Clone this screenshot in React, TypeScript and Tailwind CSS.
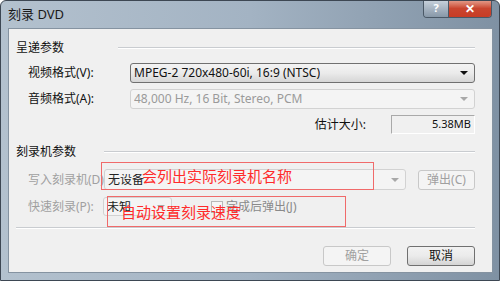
import React from 'react';

const font = { fontFamily: '"Noto Sans", "Noto Sans CJK SC", sans-serif' };

const Arrow = ({ disabled }: { disabled?: boolean }) => (
    <div
        className={`w-0 h-0 border-l-[4px] border-r-[4px] border-t-[4px] border-l-transparent border-r-transparent ${
            disabled ? 'border-t-[#a8a8a8]' : 'border-t-[#111]'
        }`}
    />
);

const Combo = ({ text, disabled, className }: { text: string; disabled?: boolean; className?: string }) => (
    <div
        className={`flex items-center justify-between rounded-[3px] border pl-[3px] pr-[6px] text-[12px] leading-none ${
            disabled
                ? 'border-[#d2d2d2] bg-[#f4f4f4] text-[#9a9a9a]'
                : 'border-[#707070] bg-gradient-to-b from-[#f3f3f3] via-[#ebebeb] to-[#d6d6d6] text-[#111]'
        } ${className ?? ''}`}
    >
        <span className="whitespace-nowrap overflow-hidden">{text}</span>
        <Arrow disabled={disabled} />
    </div>
);

const Separator = ({ className }: { className?: string }) => (
    <div className={`h-[2px] border-t border-[#c9ccd0] border-b border-b-white ${className ?? ''}`} />
);

const Button = ({ label, disabled, className }: { label: string; disabled?: boolean; className?: string }) => (
    <div
        className={`flex items-center justify-center rounded-[3px] border text-[12px] leading-none ${
            disabled
                ? 'border-[#c8c8c8] bg-[#f4f4f4] text-[#a0a0a0]'
                : 'border-[#707070] bg-gradient-to-b from-[#f2f2f2] via-[#ebebeb] to-[#d4d4d4] text-[#111]'
        } ${className ?? ''}`}
    >
        {label}
    </div>
);

export default function App() {
    return (
        <div
            className="relative w-[500px] h-[281px] overflow-hidden rounded-t-[6px] border border-[#3d4753] bg-gradient-to-r from-[#b3c1ce] via-[#a3b3c3] to-[#7f91a3]"
            style={font}
        >
            {/* title bar */}
            <div className="flex h-[27px] items-start justify-between">
                <div className="pl-[7px] pt-[4px] text-[13px] text-[#1a1a1a]">刻录 DVD</div>
                <div className="mr-[7px] flex h-[18px] -mt-[1px] overflow-hidden rounded-b-[4px] border border-t-0 border-[#4a5866]">
                    <div className="flex w-[25px] items-center justify-center border-r border-[#4a5866] bg-gradient-to-b from-[#c9d3dd] via-[#a7b4c2] to-[#8898a8] text-[11px] font-bold text-white">
                        ?
                    </div>
                    <div className="flex w-[42px] items-center justify-center bg-gradient-to-b from-[#e4a090] via-[#c9452f] to-[#c83c25] text-[12px] font-bold text-white">
                        ✕
                    </div>
                </div>
            </div>

            {/* client area */}
            <div className="relative ml-[7px] h-[245px] w-[485px] border border-[#8593a1] bg-[#f0f0f0] pl-[7px] pr-[17px] text-[12px] text-[#111]">
                {/* section 1 */}
                <div className="mt-[11px] flex h-[16px] items-center">
                    <div className="w-[102px]">呈递参数</div>
                    <Separator className="flex-1" />
                </div>

                <div className="mt-[7px] flex h-[20px] items-center">
                    <div className="w-[114px] pl-[12px]">视频格式(V):</div>
                    <Combo text="MPEG-2 720x480-60i, 16:9 (NTSC)" className="h-[20px] flex-1" />
                </div>

                <div className="mt-[6px] flex h-[20px] items-center">
                    <div className="w-[114px] pl-[12px]">音频格式(A):</div>
                    <Combo text="48,000 Hz, 16 Bit, Stereo, PCM" disabled className="h-[20px] flex-1" />
                </div>

                <div className="mt-[6px] flex h-[19px] items-center justify-end">
                    <div className="mr-[25px]">估计大小:</div>
                    <div className="flex h-[19px] w-[84px] items-center justify-end border border-[#a9a9a9] border-b-white border-r-white bg-[#f0f0f0] pr-[3px] text-[11px]">
                        5.38MB
                    </div>
                </div>

                {/* section 2 */}
                <div className="mt-[10px] flex h-[16px] items-center">
                    <div className="w-[88px]">刻录机参数</div>
                    <Separator className="flex-1" />
                </div>

                <div className="mt-[9px] flex h-[21px] items-center">
                    <div className="w-[88px] overflow-hidden whitespace-nowrap pl-[12px] text-[#a0a0a0]">写入刻录机(D):</div>
                    <Combo text="无设备" disabled className="h-[21px] w-[302px] border-[#c8c8c8] !text-[#222]" />
                    <Button label="弹出(C)" disabled className="ml-[12px] h-[20px] flex-1" />
                </div>

                <div className="mt-[7px] flex h-[19px] items-center">
                    <div className="w-[87px] whitespace-nowrap pl-[12px] text-[#a0a0a0]">快速刻录(P):</div>
                    <Combo text="未知" disabled className="h-[19px] w-[69px] !text-[#222]" />
                    <div className="ml-[39px] h-[12px] w-[12px] border border-[#b8b8b8] bg-[#f6f6f6]" />
                    <div className="ml-[3px] text-[#8a8a8a]">完成后弹出(J)</div>
                </div>

                <Separator className="mt-[11px]" />

                <div className="mt-[17px] flex h-[20px] justify-end">
                    <Button label="确定" disabled className="h-[20px] w-[68px]" />
                    <Button label="取消" className="ml-[16px] h-[20px] w-[68px]" />
                </div>

                {/* annotations */}
                <div className="absolute left-[92px] top-[133px] flex h-[28px] w-[273px] items-center border border-[#f06a6a] pl-[40px] text-[15px] text-[#ff2b2b]">
                    会列出实际刻录机名称
                </div>
                <div className="absolute left-[98px] top-[167px] flex h-[31px] w-[239px] items-end border border-[#f06a6a] pb-[3px] pl-[13px] text-[15px] text-[#ff2b2b]">
                    自动设置刻录速度
                </div>
            </div>
        </div>
    );
}
